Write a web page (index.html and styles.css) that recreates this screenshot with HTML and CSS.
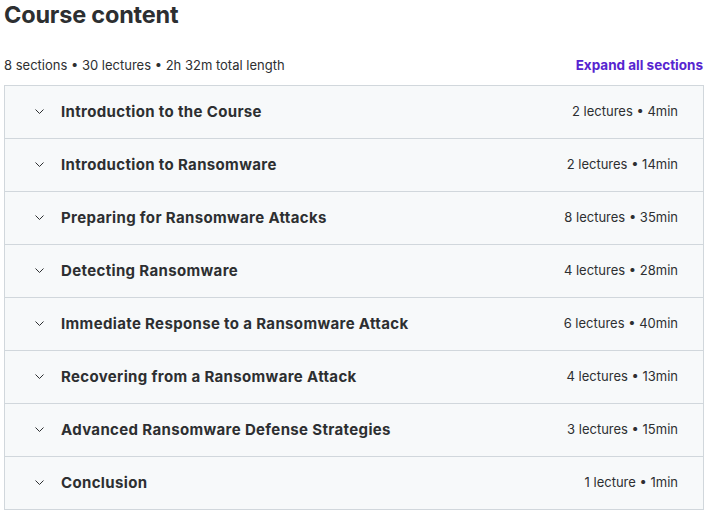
FILE: index.html
```html
<!DOCTYPE html>
<html>
<head>
<meta charset="utf-8">
<link rel="stylesheet" href="styles.css">
</head>
<body>
<div class="page">
  <h2 class="title">Course content</h2>
  <div class="meta">
    <span class="stats">8 sections • 30 lectures • 2h 32m total length</span>
    <button class="expand">Expand all sections</button>
  </div>
  <div class="panel">
    <div class="row"><span class="chev"><svg width="9" height="5" viewBox="0 0 9 5"><path d="M0.5 0.5l4 4 4-4" fill="none" stroke="#2d2f31" stroke-width="1"/></svg></span><span class="name">Introduction to the Course</span><span class="info">2 lectures • 4min</span></div>
    <div class="row"><span class="chev"><svg width="9" height="5" viewBox="0 0 9 5"><path d="M0.5 0.5l4 4 4-4" fill="none" stroke="#2d2f31" stroke-width="1"/></svg></span><span class="name">Introduction to Ransomware</span><span class="info">2 lectures • 14min</span></div>
    <div class="row"><span class="chev"><svg width="9" height="5" viewBox="0 0 9 5"><path d="M0.5 0.5l4 4 4-4" fill="none" stroke="#2d2f31" stroke-width="1"/></svg></span><span class="name">Preparing for Ransomware Attacks</span><span class="info">8 lectures • 35min</span></div>
    <div class="row"><span class="chev"><svg width="9" height="5" viewBox="0 0 9 5"><path d="M0.5 0.5l4 4 4-4" fill="none" stroke="#2d2f31" stroke-width="1"/></svg></span><span class="name">Detecting Ransomware</span><span class="info">4 lectures • 28min</span></div>
    <div class="row"><span class="chev"><svg width="9" height="5" viewBox="0 0 9 5"><path d="M0.5 0.5l4 4 4-4" fill="none" stroke="#2d2f31" stroke-width="1"/></svg></span><span class="name">Immediate Response to a Ransomware Attack</span><span class="info">6 lectures • 40min</span></div>
    <div class="row"><span class="chev"><svg width="9" height="5" viewBox="0 0 9 5"><path d="M0.5 0.5l4 4 4-4" fill="none" stroke="#2d2f31" stroke-width="1"/></svg></span><span class="name">Recovering from a Ransomware Attack</span><span class="info">4 lectures • 13min</span></div>
    <div class="row"><span class="chev"><svg width="9" height="5" viewBox="0 0 9 5"><path d="M0.5 0.5l4 4 4-4" fill="none" stroke="#2d2f31" stroke-width="1"/></svg></span><span class="name">Advanced Ransomware Defense Strategies</span><span class="info">3 lectures • 15min</span></div>
    <div class="row"><span class="chev"><svg width="9" height="5" viewBox="0 0 9 5"><path d="M0.5 0.5l4 4 4-4" fill="none" stroke="#2d2f31" stroke-width="1"/></svg></span><span class="name">Conclusion</span><span class="info">1 lecture • 1min</span></div>
  </div>
</div>
</body>
</html>
```
FILE: styles.css
```css
* { box-sizing: border-box; }
html, body { margin: 0; padding: 0; background: #fff; }
body { font-family: Inter, "Noto Sans", sans-serif; color: #2d2f31; }
.page { padding: 0 4px; }
.title {
  margin: 0;
  padding-top: 1px;
  font-size: 23.5px;
  line-height: 28px;
  font-weight: 700;
  letter-spacing: -0.2px;
  color: #2d2f31;
}
.meta {
  display: flex;
  justify-content: space-between;
  align-items: center;
  margin-top: 26px;
  height: 20px;
  margin-bottom: 10px;
}
.stats { font-size: 13px; color: #2d2f31; }
.expand {
  border: 0; background: none; padding: 0; margin-right: 1px;
  font-family: inherit; font-size: 13.5px; font-weight: 700; color: #5624d0;
}
.panel { border: 1px solid #d1d7dc; border-bottom: 0; }
.row {
  display: flex;
  align-items: center;
  height: 53px;
  background: #f7f9fa;
  border-bottom: 1px solid #d1d7dc;
  padding: 0 25px 1px 30px;
}
.chev { width: 26px; display: flex; align-items: center; padding-left: 0; }
.name { flex: 1; font-size: 15px; font-weight: 700; letter-spacing: 0.35px; color: #2d2f31; }
.info { font-size: 13px; color: #2d2f31; padding-bottom: 2px; }
```
